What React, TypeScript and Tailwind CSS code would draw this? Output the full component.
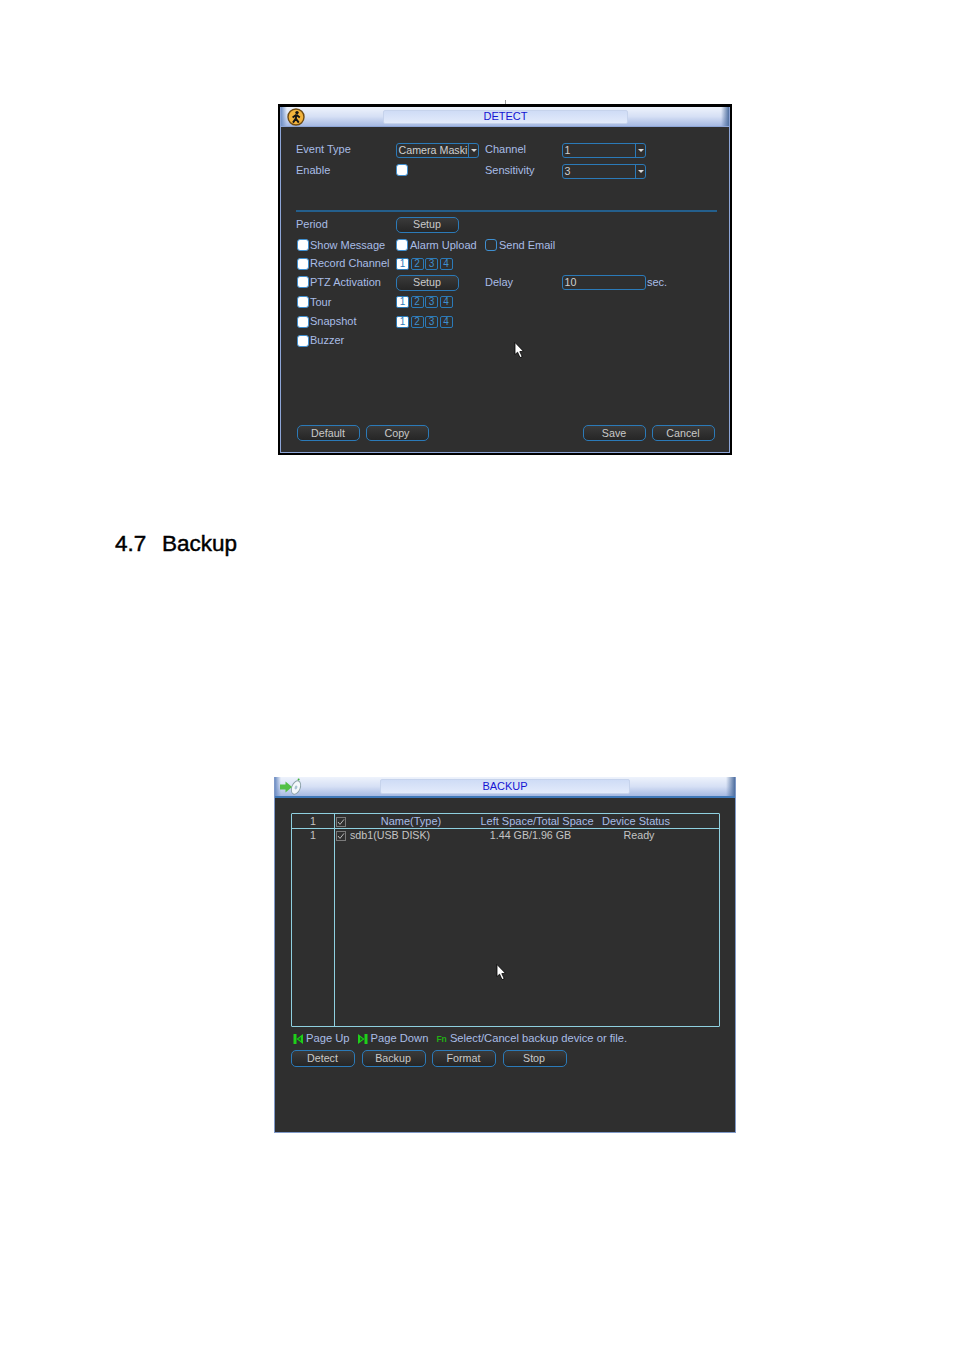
const font = { fontFamily: '"Liberation Sans", Arial, sans-serif' };

function Cursor() {
  return (
    <svg width="11" height="17" viewBox="0 0 11 17" className="block">
      <path d="M1 0.5 L1 12.5 L3.6 10.2 L6 15.6 L8.2 14.6 L5.8 9.6 L9.4 9.2 Z" fill="#fff" stroke="#000" strokeWidth="0.8" />
    </svg>
  );
}

function Check({ on = true, className = "" }: { on?: boolean; className?: string }) {
  return (
    <span
      className={`block h-[12px] w-[12px] shrink-0 rounded-[3px] border border-[#3f8fd0] ${on ? "bg-white" : "bg-[#2f2f2f]"} ${className}`}
    />
  );
}

function Btn({ label, className = "" }: { label: string; className?: string }) {
  return (
    <span
      className={`flex h-[16px] w-[63px] shrink-0 items-center justify-center rounded-[5px] border-[1.5px] border-[#2b7ab8] bg-gradient-to-b from-[#3a3a3a] to-[#262626] pr-[1px] text-[10.7px] leading-none text-[#c9c9c9] ${className}`}
    >
      {label}
    </span>
  );
}

function Channels() {
  return (
    <div className="flex gap-[1.5px]">
      {["1", "2", "3", "4"].map((n, i) => (
        <span
          key={n}
          className={`flex h-[12px] w-[13px] items-center justify-center rounded-[2px] border border-[#2b7ab8] text-[10px] leading-none ${i === 0 ? "bg-white text-[#2b7ab8]" : "text-[#3f8fd0]"}`}
        >
          {n}
        </span>
      ))}
    </div>
  );
}

function Select({ value, className = "" }: { value: string; className?: string }) {
  return (
    <div className={`mt-[1px] flex h-[15px] items-stretch rounded-[3px] border-[1.5px] border-[#2b7ab8] text-[10.7px] leading-none text-[#cfcfcf] ${className}`}>
      <span className="flex-1 overflow-hidden whitespace-nowrap pl-[1.5px] pt-[1px]">{value}</span>
      <span className="flex w-[10px] items-center justify-center border-l border-[#2b7ab8]">
        <span className="block h-0 w-0 border-x-[3px] border-t-[3px] border-x-transparent border-t-[#d8d8d8]" />
      </span>
    </div>
  );
}

function Row({ h, children }: { h: string; children: React.ReactNode }) {
  return <div className={`grid grid-cols-[100px_89px_77px_1fr] items-center ${h}`}>{children}</div>;
}

function Label({ children }: { children: React.ReactNode }) {
  return <span className="whitespace-nowrap text-[11px] leading-none text-[#a9bde6]">{children}</span>;
}

function CheckLabel({ label, on = true, tall = false }: { label: string; on?: boolean; tall?: boolean }) {
  return (
    <div className={`flex items-center ${tall ? "gap-[1px] pl-[1px]" : "gap-[2px]"}`}>
      <Check on={on} />
      <Label>{label}</Label>
    </div>
  );
}

function TitleBar({ title, icon, h, boxClass, cap }: { title: string; icon: React.ReactNode; h: string; boxClass: string; cap: string }) {
  return (
    <div className={`relative flex items-center bg-gradient-to-b from-[#eef3fc] via-[#d6e0f5] to-[#a6b9e2] ${h}`}>
      <div className="absolute inset-y-0 left-0 w-[6px] bg-gradient-to-r from-[#6f8fc4] to-transparent" />
      <div className="relative w-[40px] shrink-0 pl-[6px]">{icon}</div>
      <div className={`flex items-center justify-center rounded-[2px] border border-[#c6d3ec] bg-gradient-to-b from-[#cfdcf6] to-[#e3ebfb] text-[11px] leading-none text-[#1414d2] ${boxClass}`}>
        {title}
      </div>
      <div className="flex-1" />
      <div className={`h-full bg-gradient-to-r from-transparent to-[#4f6f9f] ${cap}`} />
    </div>
  );
}

function DetectIcon() {
  return (
    <svg width="18" height="18" viewBox="0 0 18 18" className="block">
      <circle cx="9" cy="9" r="8" fill="#f2b33c" stroke="#6e4a12" strokeWidth="1.4" />
      <circle cx="10" cy="4.6" r="1.7" fill="#141414" />
      <path d="M9.4 6.8 L5.6 9.6 M9.4 6.8 L12.8 9.4 M9.4 6.8 L8.8 10.6 L6 14.6 M8.8 10.6 L11.8 14.6" stroke="#141414" strokeWidth="1.9" fill="none" />
    </svg>
  );
}

function BackupIcon() {
  return (
    <svg width="24" height="18" viewBox="0 0 24 18" className="-ml-[1px] block">
      <ellipse cx="16" cy="9.5" rx="4.2" ry="7" transform="rotate(22 16 9.5)" fill="#f4f8fb" stroke="#8aa0a8" strokeWidth="0.9" />
      <ellipse cx="16" cy="9.5" rx="1.3" ry="2" transform="rotate(22 16 9.5)" fill="#a9c2d4" />
      <circle cx="18.6" cy="1.6" r="1" fill="#3fae3a" />
      <path d="M0 6.5 L5.5 6.5 L5.5 3.5 L12 9 L5.5 14.5 L5.5 11.5 L0 11.5 Z" fill="#52c045" />
    </svg>
  );
}

function Detect() {
  return (
    <div className="relative ml-[278px] mt-[104px] h-[351px] w-[454px] bg-black px-[2px] pb-[2px] pt-[3px]">
      <div className="flex h-full flex-col border border-t-0 border-[#8ea6d8] bg-[#2f2f2f]">
        <TitleBar title="DETECT" icon={<DetectIcon />} h="h-[19px]" boxClass="h-[14px] ml-[62px] w-[245px]" cap="w-[8px]" />
        <div className="h-[1px] bg-[#8ea6d8]" />
        <div className="flex flex-1 flex-col pl-[15px] pr-[12px]">
          <Row h="h-[21px] mt-[12px]">
            <Label>Event Type</Label>
            <Select value="Camera Maski" className="w-[83px]" />
            <Label>Channel</Label>
            <Select value="1" className="w-[84px]" />
          </Row>
          <Row h="h-[21px]">
            <Label>Enable</Label>
            <Check className="mb-[1px]" />
            <Label>Sensitivity</Label>
            <Select value="3" className="w-[84px]" />
          </Row>
          <div className="mt-[29px] h-[1.5px] bg-[#245f8c]" />
          <Row h="h-[20px] mt-[2.5px]">
            <Label>Period</Label>
            <Btn label="Setup" className="mt-[1px]" />
          </Row>
          <Row h="h-[20px] mt-[1px]">
            <CheckLabel label="Show Message" tall />
            <CheckLabel label="Alarm Upload" />
            <CheckLabel label="Send Email" on={false} />
          </Row>
          <Row h="h-[17px]">
            <CheckLabel label="Record Channel" tall />
            <Channels />
          </Row>
          <Row h="h-[20px]">
            <CheckLabel label="PTZ Activation" tall />
            <Btn label="Setup" className="mt-[1px]" />
            <Label>Delay</Label>
            <div className="mt-[1px] flex items-center gap-[1px]">
              <div className="flex h-[15px] w-[84px] items-center rounded-[3px] border-[1.5px] border-[#2b7ab8] pl-[1.5px] text-[10.7px] leading-none text-[#cfcfcf]">10</div>
              <Label>sec.</Label>
            </div>
          </Row>
          <Row h="h-[20px]">
            <CheckLabel label="Tour" tall />
            <Channels />
          </Row>
          <Row h="h-[19px]">
            <CheckLabel label="Snapshot" tall />
            <Channels />
          </Row>
          <Row h="h-[19px]">
            <CheckLabel label="Buzzer" tall />
          </Row>
          <div className="mb-[11px] mr-[2px] mt-auto flex gap-[6px] pl-[1px]">
            <Btn label="Default" className="w-[62.5px]" />
            <Btn label="Copy" className="w-[62.5px]" />
            <div className="flex-1" />
            <Btn label="Save" />
            <Btn label="Cancel" />
          </div>
        </div>
      </div>
      <div className="absolute left-[227px] top-[-4px] h-[4px] w-[1px] bg-[#9a9a9a]" />
      <div className="absolute left-[236px] top-[238px]"><Cursor /></div>
    </div>
  );
}

function Backup() {
  return (
    <div className="relative ml-[274px] mt-[218px] flex h-[356px] w-[462px] flex-col border border-t-0 border-[#7f99c8] bg-[#2f2f2f]">
      <TitleBar title="BACKUP" icon={<BackupIcon />} h="h-[19px]" boxClass="h-[15px] ml-[65px] w-[250px]" cap="w-[9px]" />
      <div className="h-[2px] bg-[#3f78b8]" />
      <div className="mx-[16px] mt-[15px] flex h-[214px] w-[429px] rounded-[1px] border border-[#8fd0e0] text-[10.7px] leading-none">
        <div className="flex w-[43px] shrink-0 flex-col border-r border-[#8fd0e0] text-center text-[#c4c4c4]">
          <div className="flex h-[15px] items-center justify-center border-b border-[#8fd0e0] pt-[1px]">1</div>
          <div className="flex h-[13px] items-center justify-center">1</div>
        </div>
        <div className="flex-1">
          <div className="flex h-[15px] items-center border-b border-[#8fd0e0] pt-[1px] text-[11px] text-[#a9bde6]">
            <BoxCheck />
            <span className="w-[122px] text-center">Name(Type)</span>
            <span className="w-[130px] whitespace-nowrap text-center">Left Space/Total Space</span>
            <span className="w-[68px] whitespace-nowrap text-center">Device Status</span>
          </div>
          <div className="flex h-[13px] items-center text-[#c4c4c4]">
            <BoxCheck />
            <span className="w-[124px] whitespace-nowrap">sdb1(USB DISK)</span>
            <span className="w-[113px] whitespace-nowrap text-center">1.44 GB/1.96 GB</span>
            <span className="w-[104px] whitespace-nowrap text-center">Ready</span>
          </div>
        </div>
      </div>
      <div className="ml-[18px] mt-[5px] flex h-[14px] items-center text-[11.2px] leading-none text-[#a9bde6]">
        <SkipIcon flip={false} />
        <span className="ml-[3px]">Page Up</span>
        <span className="ml-[8px]"><SkipIcon flip /></span>
        <span className="ml-[3px]">Page Down</span>
        <span className="ml-[8px] w-[10px] text-[8.5px] font-bold text-[#22b014]">Fn</span>
        <span className="ml-[3.5px]">Select/Cancel backup device or file.</span>
      </div>
      <div className="ml-[16px] mt-[4px] flex gap-[6.5px]">
        <Btn label="Detect" className="w-[64px] h-[17px]" />
        <Btn label="Backup" className="w-[64px] h-[17px]" />
        <Btn label="Format" className="w-[64px] h-[17px]" />
        <Btn label="Stop" className="w-[64px] h-[17px]" />
      </div>
      <div className="absolute left-[221px] top-[187px]"><Cursor /></div>
    </div>
  );
}

function BoxCheck() {
  return (
    <span className="ml-[1px] mr-[4px] flex h-[10px] w-[10px] shrink-0 items-center justify-center border border-[#7a7a7a]">
      <svg width="8" height="8" viewBox="0 0 8 8">
        <path d="M1 4 L3 6.4 L7 1.4" fill="none" stroke="#c8c8c8" strokeWidth="0.9" />
      </svg>
    </span>
  );
}

function SkipIcon({ flip }: { flip: boolean }) {
  return (
    <svg width="10" height="10" viewBox="0 0 10 10" className={`block ${flip ? "-scale-x-100" : ""}`}>
      <rect x="0.5" y="0" width="3" height="10" fill="#1fd01a" />
      <path d="M10 0 L3.5 5 L10 10 Z" fill="#1fd01a" />
      <path d="M8 3 L5 5 L8 7 Z" fill="#0c7a10" />
    </svg>
  );
}

export default function App() {
  return (
    <div style={font} className="flow-root h-[1350px] w-[954px] overflow-hidden bg-white">
      <Detect />
      <div className="ml-[115px] mt-[74px] flex h-[30px] items-center text-[22.5px] leading-none text-black [-webkit-text-stroke:0.45px_black]">
        <span className="w-[47px]">4.7</span>
        <span>Backup</span>
      </div>
      <Backup />
    </div>
  );
}
